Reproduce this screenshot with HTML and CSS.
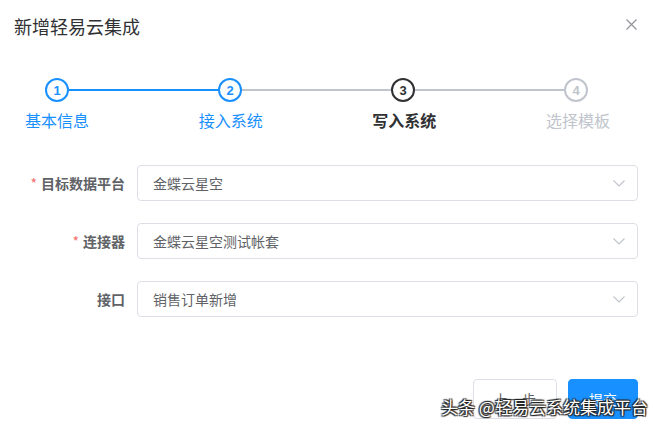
FILE: index.html
```html
<!DOCTYPE html>
<html lang="zh-CN">
  <head>
    <meta charset="UTF-8" />
    <meta name="viewport" content="width=device-width, initial-scale=1.0" />
    <title>新增轻易云集成</title>
    <link rel="stylesheet" href="styles.css">
  </head>
  <body>
    <div class="dialog">
      <div class="dialog-header">
        <span class="dialog-title">新增轻易云集成</span>
        <button class="close-btn" aria-label="关闭">
          <svg width="11" height="11" viewBox="0 0 11 11">
            <path d="M0.5 0.5 L10.5 10.5 M10.5 0.5 L0.5 10.5" stroke="#909399" stroke-width="1.2" fill="none" />
          </svg>
        </button>
      </div>

      <div class="steps">
        <div class="step-track">
          <span class="step-icon finish">1</span>
          <span class="step-line finish"></span>
          <span class="step-icon finish">2</span>
          <span class="step-line"></span>
          <span class="step-icon process">3</span>
          <span class="step-line"></span>
          <span class="step-icon wait">4</span>
        </div>
        <div class="step-labels">
          <span class="step-title finish">基本信息</span>
          <span class="step-title finish">接入系统</span>
          <span class="step-title process">写入系统</span>
          <span class="step-title wait">选择模板</span>
        </div>
      </div>

      <form class="form">
        <div class="form-item">
          <label class="form-label"><span class="required">*</span>目标数据平台</label>
          <div class="select">
            <span class="select-value">金蝶云星空</span>
            <svg class="select-arrow" width="12" height="7" viewBox="0 0 12 7">
              <path d="M0.5 0.5 L6 6 L11.5 0.5" stroke="#c0c4cc" stroke-width="1.1" fill="none" />
            </svg>
          </div>
        </div>
        <div class="form-item">
          <label class="form-label"><span class="required">*</span>连接器</label>
          <div class="select">
            <span class="select-value">金蝶云星空测试帐套</span>
            <svg class="select-arrow" width="12" height="7" viewBox="0 0 12 7">
              <path d="M0.5 0.5 L6 6 L11.5 0.5" stroke="#c0c4cc" stroke-width="1.1" fill="none" />
            </svg>
          </div>
        </div>
        <div class="form-item">
          <label class="form-label">接口</label>
          <div class="select">
            <span class="select-value">销售订单新增</span>
            <svg class="select-arrow" width="12" height="7" viewBox="0 0 12 7">
              <path d="M0.5 0.5 L6 6 L11.5 0.5" stroke="#c0c4cc" stroke-width="1.1" fill="none" />
            </svg>
          </div>
        </div>
      </form>

      <div class="dialog-footer">
        <button class="btn">上一步</button>
        <button class="btn btn-primary">提交</button>
      </div>
    </div>

    <div class="watermark">头条 @轻易云系统集成平台</div>
  </body>
</html>
```

FILE: styles.css
```css
* {
  margin: 0;
  padding: 0;
  box-sizing: border-box;
}

body {
  font-family: "Noto Sans CJK SC", "Noto Sans", sans-serif;
  background-color: #fff;
  color: #606266;
  width: 655px;
  height: 428px;
  overflow: hidden;
  position: relative;
}

.dialog {
  display: flex;
  flex-direction: column;
}

.dialog-header {
  display: flex;
  justify-content: space-between;
  align-items: center;
  padding: 13px 18px 0 14px;
  height: 38px;
}

.dialog-title {
  font-size: 18px;
  line-height: 24px;
  color: #303133;
}

.close-btn {
  border: none;
  background: none;
  display: flex;
  margin-top: -2px;
}

/* steps */
.steps {
  margin-top: 40px;
}

.step-track {
  display: flex;
  align-items: center;
  padding-left: 45px;
  width: 588px;
}

.step-icon {
  width: 24px;
  height: 24px;
  border-radius: 50%;
  border: 2px solid #c0c4cc;
  display: flex;
  justify-content: center;
  align-items: center;
  font-family: "Liberation Sans", Arial, sans-serif;
  font-size: 13px;
  font-weight: bold;
  color: #c0c4cc;
  flex-shrink: 0;
}

.step-icon.finish {
  border-color: #1890ff;
  color: #1890ff;
}

.step-icon.process {
  border-color: #303133;
  color: #303133;
}

.step-line {
  flex: 1;
  height: 2px;
  background-color: #c0c4cc;
}

.step-line.finish {
  background-color: #1890ff;
}

.step-labels {
  display: flex;
  justify-content: space-between;
  padding-left: 25px;
  width: 610px;
  margin-top: 7px;
}

.step-title {
  width: 64px;
  text-align: center;
  font-size: 16px;
  line-height: 22px;
  color: #c0c4cc;
}

.step-title.finish {
  color: #1890ff;
}

.step-title.process {
  color: #303133;
  font-weight: bold;
}

/* form */
.form {
  margin-top: 34px;
  padding-right: 17px;
}

.form-item {
  display: flex;
  align-items: center;
  margin-bottom: 22px;
}

.form-label {
  width: 137px;
  padding-right: 12px;
  text-align: right;
  font-size: 14px;
  font-weight: bold;
  color: #606266;
}

.required {
  color: #f56c6c;
  margin-right: 4px;
  font-weight: normal;
}

.select {
  flex: 1;
  height: 36px;
  border: 1px solid #dcdfe6;
  border-radius: 4px;
  display: flex;
  align-items: center;
  justify-content: space-between;
  padding: 0 12px 0 15px;
}

.select-value {
  font-size: 14px;
  color: #606266;
}

/* footer */
.dialog-footer {
  display: flex;
  justify-content: flex-end;
  gap: 11px;
  padding: 40px 17px 0 0;
}

.btn {
  height: 40px;
  padding: 0 20px;
  font-family: "Noto Sans CJK SC", sans-serif;
  font-size: 14px;
  border: 1px solid #dcdfe6;
  border-radius: 4px;
  background-color: #fff;
  color: #606266;
}

.btn-primary {
  background-color: #1890ff;
  border-color: #1890ff;
  color: #fff;
}

.watermark {
  position: absolute;
  left: 441px;
  top: 396px;
  font-size: 17px;
  line-height: 22px;
  color: #fff;
  text-shadow: 1px 1px 1px #222, -1px -1px 1px #222, 1px -1px 1px #222, -1px 1px 1px #222;
  white-space: nowrap;
}
```
